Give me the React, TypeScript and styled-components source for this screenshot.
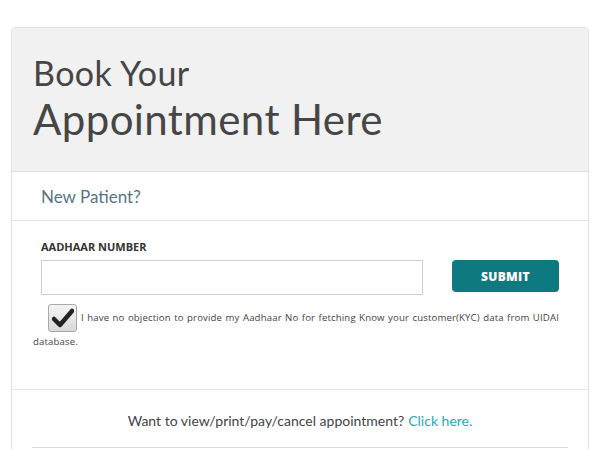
import * as React from 'react';
import styled, { createGlobalStyle } from 'styled-components';

const GlobalStyle = createGlobalStyle`
  html, body {
    margin: 0;
    padding: 0;
    background: #fff;
    font-family: 'Lato', 'Open Sans', sans-serif;
    overflow: hidden;
  }
`;

const Page = styled.div`
  padding: 27px 11px 0 11px;
`;

const Card = styled.div`
  border: 1px solid #e2e2e2;
  border-radius: 4px 4px 0 0;
  background: #fff;
  min-height: 460px;
`;

const Header = styled.div`
  background: #f1f1f1;
  height: 144px;
  box-sizing: border-box;
  padding: 25px 21px 0 21px;
  border-bottom: 1px solid #e0e0e0;
  border-radius: 4px 4px 0 0;
  color: #464646;
`;

const TitleLine = styled.div<{ size: number; lh: number }>`
  font-family: 'Lato', sans-serif;
  font-weight: 400;
  font-size: ${(p) => p.size}px;
  line-height: ${(p) => p.lh}px;
  letter-spacing: 0.4px;
`;

const SubHeader = styled.div`
  padding: 14px 29px 0 29px;
  height: 49px;
  box-sizing: border-box;
  border-bottom: 1px solid #e4e4e4;
  font-family: 'Lato', sans-serif;
  font-size: 17px;
  color: #58757f;
`;

const Form = styled.div`
  padding: 18px 29px 0 21px;
  height: 169px;
  box-sizing: border-box;
  border-bottom: 1px solid #e4e4e4;
`;

const FieldLabel = styled.div`
  font-family: 'Open Sans', sans-serif;
  font-weight: 700;
  font-size: 11px;
  color: #333;
  padding-left: 8px;
  margin-bottom: 6px;
`;

const InputRow = styled.div`
  display: flex;
  align-items: flex-start;
  padding-left: 8px;
  gap: 29px;
`;

const TextInput = styled.input`
  width: 382px;
  height: 35px;
  box-sizing: border-box;
  border: 1px solid #cfcfcf;
  border-radius: 0;
  outline: none;
  padding: 0 8px;
`;

const SubmitButton = styled.button`
  width: 107px;
  height: 32px;
  border: none;
  border-radius: 4px;
  background: #0e7a7f;
  color: #fff;
  font-family: 'Open Sans', sans-serif;
  font-weight: 800;
  font-size: 12px;
  letter-spacing: 0.3px;
  cursor: pointer;
`;

const Consent = styled.p`
  margin: 9px 0 0 0;
  font-family: 'Open Sans', sans-serif;
  font-size: 9.6px;
  line-height: 19px;
  color: #444;
  text-align: justify;
  width: 526px;
  letter-spacing: 0.15px;
`;

const CheckBox = styled.span`
  display: inline-flex;
  align-items: center;
  justify-content: center;
  vertical-align: middle;
  width: 29px;
  height: 28px;
  margin: 0 4px 0 15px;
  border: 1px solid #a9a9a9;
  border-radius: 3px;
  background: linear-gradient(#f4f4f4, #d9d9d9);
  box-sizing: border-box;
`;

const Footer = styled.div`
  margin: 0 20px;
  height: 58px;
  box-sizing: border-box;
  border-bottom: 1px solid #dcdcdc;
  display: flex;
  align-items: center;
  justify-content: center;
  padding-top: 4px;
  font-family: 'Lato', sans-serif;
  font-size: 14px;
  color: #444;
`;

const Link = styled.a`
  color: #2aa9b3;
  text-decoration: none;
  margin-left: 4px;
`;

const Check = () => (
  <svg width="22" height="20" viewBox="0 0 22 20">
    <path d="M2 11 L8 17 L20 3" fill="none" stroke="#222" strokeWidth="4.5" strokeLinecap="round" strokeLinejoin="round" />
  </svg>
);

export default function App() {
  return (
    <Page>
      <GlobalStyle />
      <Card>
        <Header>
          <TitleLine size={34} lh={40}>Book Your</TitleLine>
          <TitleLine size={42} lh={52}>Appointment Here</TitleLine>
        </Header>
        <SubHeader>New Patient?</SubHeader>
        <Form>
          <FieldLabel>AADHAAR NUMBER</FieldLabel>
          <InputRow>
            <TextInput type="text" />
            <SubmitButton>SUBMIT</SubmitButton>
          </InputRow>
          <Consent>
            <CheckBox>
              <Check />
            </CheckBox>
            I have no objection to provide my Aadhaar No for fetching Know your customer(KYC) data from UIDAI database.
          </Consent>
        </Form>
        <Footer>
          Want to view/print/pay/cancel appointment?<Link href="#">Click here.</Link>
        </Footer>
      </Card>
    </Page>
  );
}
